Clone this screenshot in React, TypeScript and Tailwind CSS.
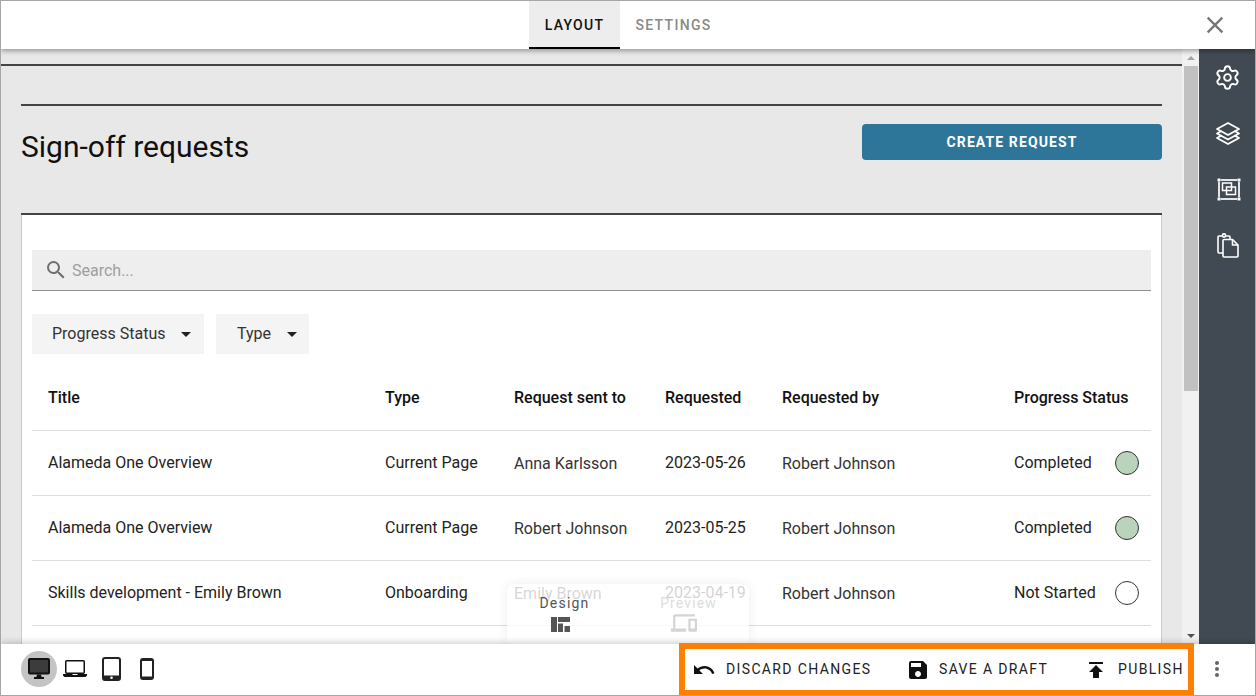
import { Settings } from "lucide-react";
import {
  MdClose, MdSearch, MdArrowDropDown,
  MdUndo, MdSave, MdPublish, MdMoreVert, MdOutlineDevices,
} from "react-icons/md";
import type { ReactNode } from "react";

const cols = "grid grid-cols-[337px_129px_151px_117px_232px_153px]";

const rows = [
  { title: "Alameda One Overview", type: "Current Page", to: "Anna Karlsson", date: "2023-05-26", by: "Robert Johnson", status: "Completed", done: true },
  { title: "Alameda One Overview", type: "Current Page", to: "Robert Johnson", date: "2023-05-25", by: "Robert Johnson", status: "Completed", done: true },
  { title: "Skills development - Emily Brown", type: "Onboarding", to: "Emily Brown", date: "2023-04-19", by: "Robert Johnson", status: "Not Started", done: false },
];

function LayersIcon() {
  return (
    <svg width="26" height="25" viewBox="0 0 26 25" fill="none" stroke="white" strokeWidth="1.8" strokeLinejoin="round" strokeLinecap="round">
      <path d="M13 2 24 8 13 14 2 8z" />
      <path d="M6 10.2 2 12.5 13 18.5 24 12.5 20 10.2" />
      <path d="M6 14.7 2 17 13 23 24 17 20 14.7" />
    </svg>
  );
}

function BoxIcon() {
  return (
    <svg width="24" height="23" viewBox="0 0 24 23" fill="none" stroke="white" strokeWidth="1.5">
      <rect x="2" y="2" width="20" height="19" strokeWidth="1.7" />
      <rect x="5.5" y="5" width="9" height="7.5" />
      <rect x="9.5" y="9" width="9" height="7.5" />
      <rect x="0.2" y="0.2" width="3.6" height="3.6" fill="white" stroke="#414a52" strokeWidth="0.4" />
      <rect x="20.2" y="0.2" width="3.6" height="3.6" fill="white" stroke="#414a52" strokeWidth="0.4" />
      <rect x="0.2" y="19.2" width="3.6" height="3.6" fill="white" stroke="#414a52" strokeWidth="0.4" />
      <rect x="20.2" y="19.2" width="3.6" height="3.6" fill="white" stroke="#414a52" strokeWidth="0.4" />
    </svg>
  );
}

function PasteIcon() {
  return (
    <svg width="22" height="25" viewBox="0 0 22 25" fill="none" stroke="white" strokeWidth="1.6" strokeLinejoin="round">
      <path d="M6 20H2a1 1 0 0 1-1-1V4a1 1 0 0 1 1-1h3.500M8.500 3H12a1 1 0 0 1 1 1v2" />
      <circle cx="7" cy="2.500" r="1.600" />
      <path d="M6 7.500a1 1 0 0 1 1-1h8.500L21 12v11a1 1 0 0 1-1 1H7a1 1 0 0 1-1-1z" />
      <path d="M15.500 6.500V12H21" />
    </svg>
  );
}

function DesktopIcon() {
  return (
    <svg width="22" height="21" viewBox="0 0 22 21" fill="#111">
      <rect x="1" y="1" width="20" height="14.500" rx="1" fill="#3c3c3c" stroke="#111" strokeWidth="2" />
      <path d="M9 16.500h4l.6 2.500H16v2H6v-2h2.400z" />
    </svg>
  );
}

function LaptopIcon() {
  return (
    <svg width="24" height="17" viewBox="0 0 24 17" fill="#111">
      <rect x="2.750" y="0.750" width="18.500" height="12.500" rx="1" fill="none" stroke="#111" strokeWidth="1.500" />
      <path d="M0 14h9.500v1h5v-1H24v1.500L22.500 17h-21L0 15.500z" />
    </svg>
  );
}

function TabletIcon() {
  return (
    <svg width="19" height="24" viewBox="0 0 19 24">
      <rect x="1" y="1" width="17" height="22" rx="2" fill="none" stroke="#222" strokeWidth="2" />
      <rect x="1" y="18.500" width="17" height="4.500" fill="#222" />
      <circle cx="9.500" cy="20.700" r="1.300" fill="white" />
    </svg>
  );
}

function PhoneIcon() {
  return (
    <svg width="14" height="22" viewBox="0 0 14 22" fill="none">
      <rect x="1" y="1" width="12" height="20" rx="2" stroke="#222" strokeWidth="2" />
      <rect x="1" y="1" width="12" height="2" fill="#222" />
      <rect x="1" y="18.500" width="12" height="2.500" fill="#222" />
    </svg>
  );
}

function DesignIcon() {
  return (
    <svg width="19" height="15" viewBox="0 0 19 15" fill="#555">
      <rect x="0" y="0" width="6" height="15" />
      <rect x="7" y="0" width="12" height="5" />
      <rect x="7" y="6.500" width="5" height="8.500" />
      <rect x="13.500" y="9" width="5.500" height="6" />
    </svg>
  );
}

function Action({ icon, label, className }: { icon: ReactNode; label: string; className: string }) {
  return (
    <div className={`flex items-center ${className}`}>
      {icon}
      <span className="text-[14px] font-normal tracking-[1.36px] text-[#212121] whitespace-nowrap">{label}</span>
    </div>
  );
}

export default function App() {
  return (
    <div className="relative w-[1256px] h-[696px] overflow-hidden flex flex-col bg-white border border-[#a6a6a6] font-['Roboto',sans-serif] text-[#212121] text-[16px]">
      {/* top bar */}
      <header className="relative z-20 h-[48px] shrink-0 bg-white flex justify-center shadow-[0_2px_5px_rgba(0,0,0,0.35)]">
        <div className="flex">
          <div className="w-[91px] h-[48px] bg-[#ededed] border-b-[2px] border-black flex items-center justify-center pt-[2px] text-[14px] font-medium tracking-[1.3px] text-[#111]">LAYOUT</div>
          <div className="w-[107px] flex items-center justify-center pt-[1px] text-[14px] font-medium tracking-[1.3px] text-[#8a8a8a]">SETTINGS</div>
        </div>
        <MdClose className="absolute left-[1200px] top-[10px] text-[#777]" size={28} />
      </header>

      {/* middle */}
      <div className="flex flex-1 min-h-0">
        <main className="flex-1 min-w-0 overflow-hidden bg-[#e8e8e8] pt-[15px]">
          <div className="h-[2px] bg-[#444]" />
          <div className="px-[20px] pt-[38px] w-[1181px]">
            <div className="h-[2px] bg-[#444]" />
            <div className="h-[107px] flex justify-between items-start pt-[18px]">
              <h1 className="text-[30px] font-normal leading-[44px] pt-[1px] text-[#111]">Sign-off requests</h1>
              <button className="w-[300px] h-[36px] rounded-[4px] bg-[#2e7699] text-white text-[14px] font-bold tracking-[1.1px]">CREATE REQUEST</button>
            </div>
            <div className="h-[2px] bg-[#444]" />
            <section className="bg-white border-x border-[#ccc] px-[10px] pt-[35px] h-[600px]">
              <div className="h-[41px] bg-[#eeeeee] border-b border-[#8f8f8f] flex items-center pl-[12px] gap-[4px]">
                <MdSearch size={24} className="text-[#6e6e6e]" />
                <span className="text-[#9e9e9e] pt-[2px]">Search...</span>
              </div>
              <div className="flex gap-[12px] mt-[23px]">
                <div className="h-[40px] w-[172px] bg-[#f4f4f4] flex items-center pl-[20px] text-[#333]">
                  Progress Status
                  <MdArrowDropDown size={24} className="ml-[9px] text-[#212121]" />
                </div>
                <div className="h-[40px] w-[93px] bg-[#f4f4f4] flex items-center pl-[21px] text-[#333]">
                  Type
                  <MdArrowDropDown size={24} className="ml-[9px] text-[#212121]" />
                </div>
              </div>
              <div className={`${cols} mt-[11px] h-[66px] items-center font-medium text-[#111] border-b border-[#ddd]`}>
                <div className="pl-[16px]">Title</div>
                <div className="pl-[16px]">Type</div>
                <div className="pl-[16px]">Request sent to</div>
                <div className="pl-[16px]">Requested</div>
                <div className="pl-[16px]">Requested by</div>
                <div className="pl-[16px] whitespace-nowrap">Progress Status</div>
              </div>
              {rows.map((r) => (
                <div key={r.title + r.date} className={`${cols} h-[65px] items-center border-b border-[#ddd] text-[#222]`}>
                  <div className="pl-[16px]">{r.title}</div>
                  <div className="pl-[16px]">{r.type}</div>
                  <div className="pl-[16px] pt-[2px] text-[#333]">{r.to}</div>
                  <div className="pl-[16px]">{r.date}</div>
                  <div className="pl-[16px] pt-[2px] text-[#333]">{r.by}</div>
                  <div className="pl-[16px] flex items-center justify-between pr-[12px]">
                    <span className="whitespace-nowrap">{r.status}</span>
                    <span className={`w-[24px] h-[24px] rounded-full border border-[#333] ${r.done ? "bg-[#b9d4bb]" : "bg-white"}`} />
                  </div>
                </div>
              ))}
            </section>
          </div>
        </main>

        {/* scrollbar */}
        <div className="w-[17px] shrink-0 bg-[#f1f1f1] flex flex-col items-center">
          <div className="h-[17px] w-full flex items-center justify-center">
            <div className="border-x-[4px] border-x-transparent border-b-[4px] border-b-[#a3a3a3]" />
          </div>
          <div className="w-[14px] h-[325px] bg-[#c1c1c1]" />
          <div className="flex-1" />
          <div className="h-[17px] w-full flex items-center justify-center">
            <div className="border-x-[4px] border-x-transparent border-t-[4px] border-t-[#505050]" />
          </div>
        </div>

        {/* sidebar */}
        <aside className="w-[56px] shrink-0 bg-[#414a52] flex flex-col items-center text-white">
          <div className="h-[56px] flex items-center justify-center pl-[1px]"><Settings size={27} strokeWidth={1.7} /></div>
          <div className="h-[56px] flex items-center justify-center pl-[1px]"><LayersIcon /></div>
          <div className="h-[56px] flex items-center justify-center pl-[4px]"><BoxIcon /></div>
          <div className="h-[56px] flex items-center justify-center pl-[1px]"><PasteIcon /></div>
        </aside>
      </div>

      {/* bottom bar */}
      <footer className="relative z-20 h-[51px] shrink-0 bg-white flex items-center shadow-[0_-2px_6px_rgba(0,0,0,0.18)]">
        <div className="flex items-center ml-[20px] mb-[2px]">
          <div className="w-[36px] h-[36px] rounded-full bg-[#c4c4c4] flex items-center justify-center"><DesktopIcon /></div>
          <div className="w-[36px] flex justify-center"><LaptopIcon /></div>
          <div className="w-[36px] flex justify-center"><TabletIcon /></div>
          <div className="w-[36px] flex justify-center"><PhoneIcon /></div>
        </div>
        <div className="ml-[527px] flex items-center">
          <Action className="w-[214px] gap-[10px]" icon={<MdUndo size={24} className="text-[#111]" />} label="DISCARD CHANGES" />
          <Action className="w-[178px] gap-[9px]" icon={<MdSave size={24} className="text-[#111]" />} label="SAVE A DRAFT" />
          <Action className="gap-[10px]" icon={<MdPublish size={24} className="text-[#111]" />} label="PUBLISH" />
        </div>
        <MdMoreVert size={24} className="absolute left-[1204px] top-[13px] text-[#666]" />
      </footer>

      {/* design / preview switch floating over the table */}
      <div className="absolute z-10 left-[506px] top-[583px] w-[242px] h-[60px] rounded-t-[8px] bg-white/80 shadow-[0_0_12px_rgba(0,0,0,0.08)] flex">
        <div className="w-[121px] flex flex-col items-center pt-[11px] text-[14px] leading-[16px] tracking-[1.2px] text-[#555] pr-[6px]">
          <span>Design</span>
          <div className="mt-[6px] mr-[9px]"><DesignIcon /></div>
        </div>
        <div className="w-[121px] flex flex-col items-center pt-[11px] text-[14px] leading-[16px] tracking-[1.1px] text-[#ddd]">
          <span>Preview</span>
          <MdOutlineDevices size={26} className="text-[#d4d4d4] mt-[-1px] mr-[10px]" />
        </div>
      </div>

      {/* highlight annotation */}
      <div className="absolute z-30 left-[678px] top-[642px] w-[515px] h-[53px] border-[6px] border-[#ff8000] pointer-events-none" />
    </div>
  );
}
